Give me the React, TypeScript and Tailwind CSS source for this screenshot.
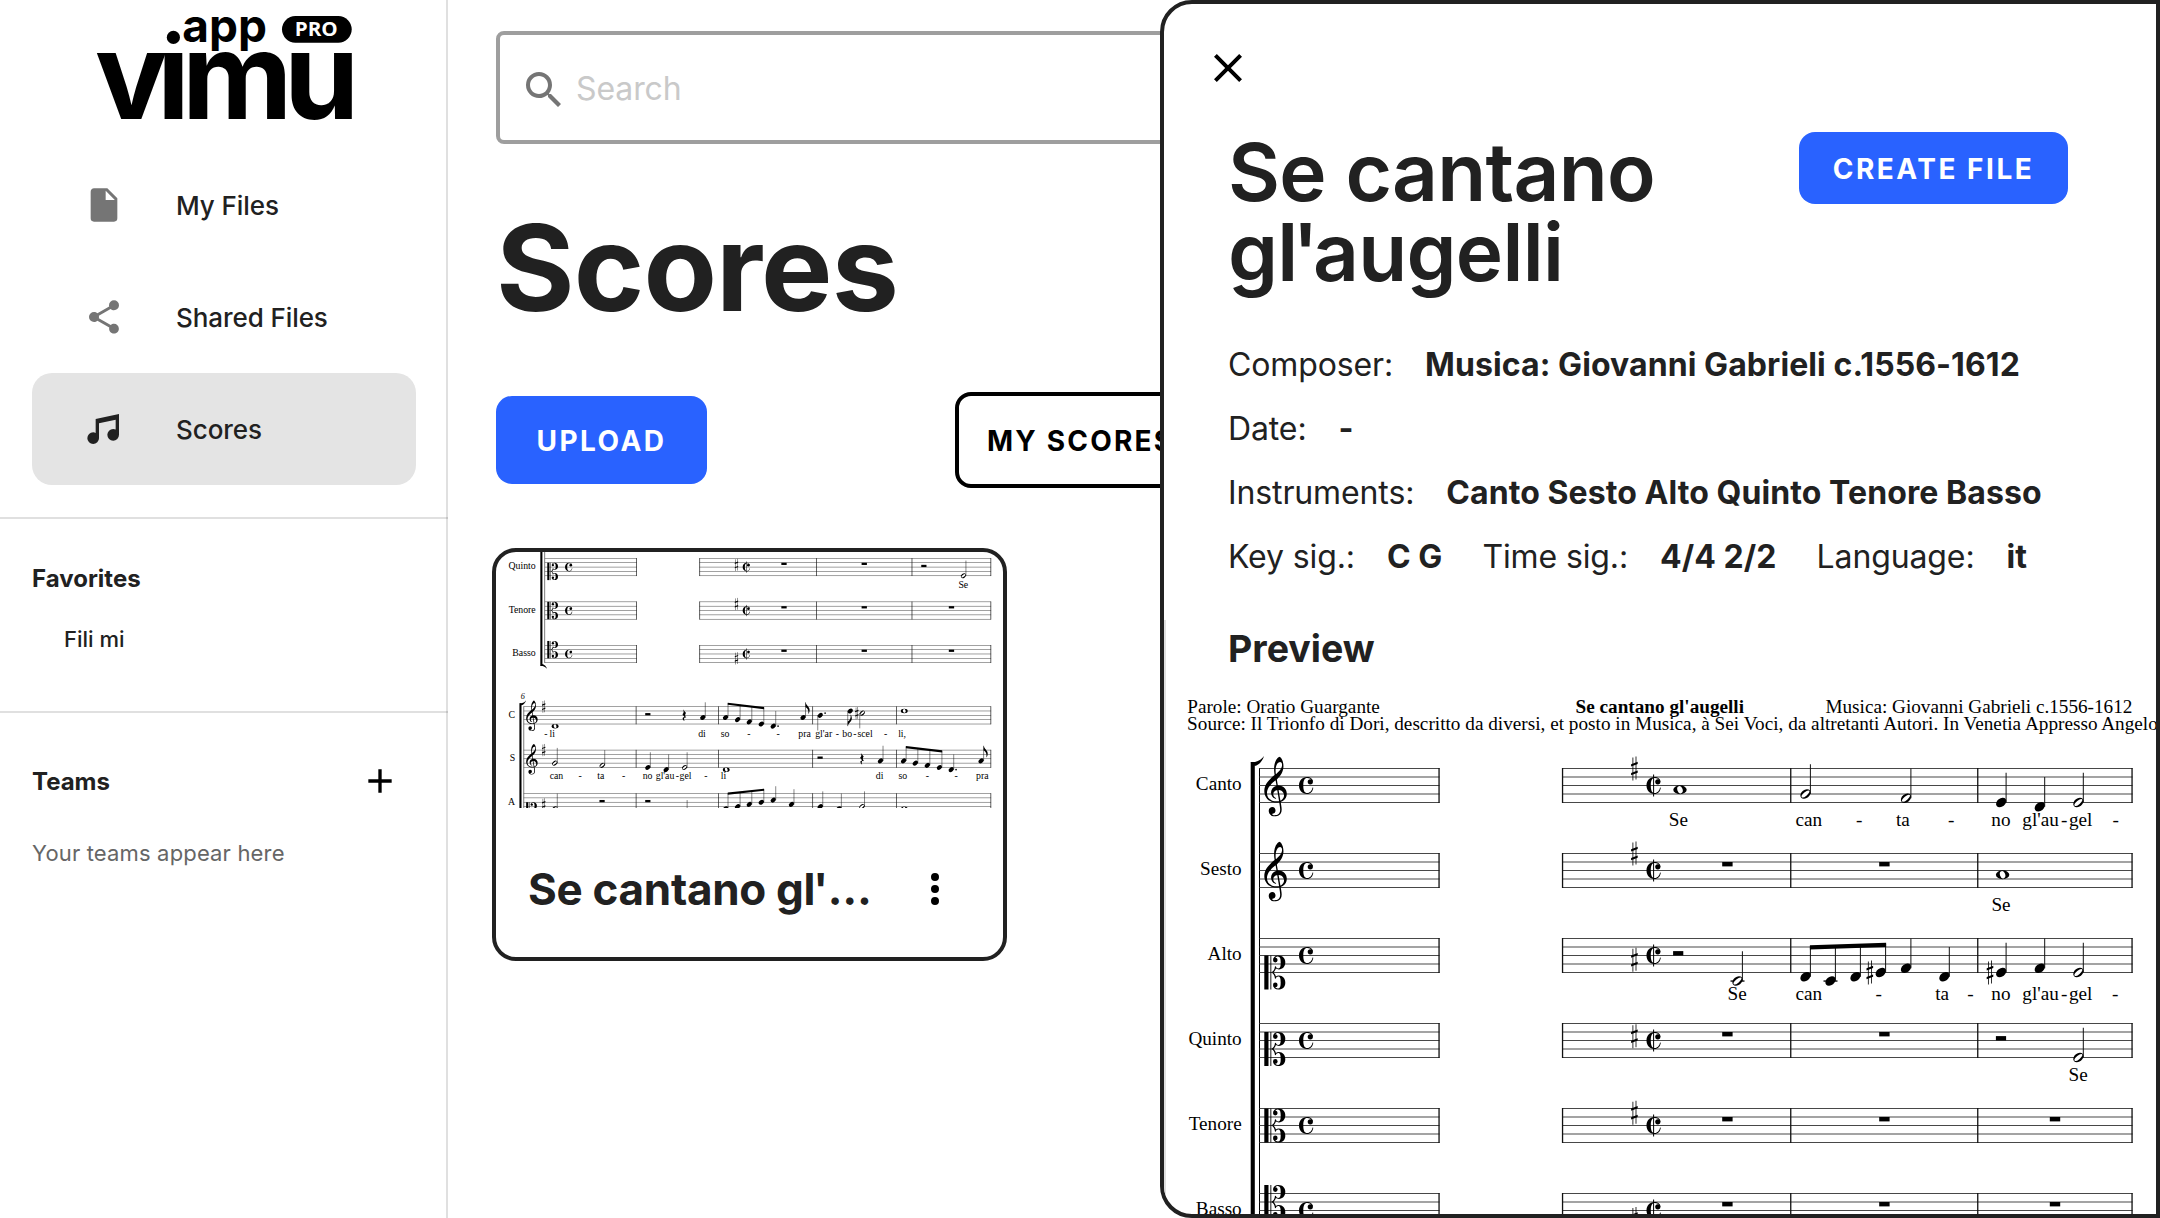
import { type ReactNode } from 'react';

const SP = 8.5;

const G_CLEF =
  'M364 -252c-245 0 -364 165 -364 339c0 202 153 345 297 464c12 10 11 12 9 24c-7 41 -14 106 -14 164c0 104 24 229 98 311c20 22 51 48 65 48c11 0 37 -28 52 -50c41 -60 65 -146 65 -233c0 -153 -82 -280 -190 -381c-6 -6 -8 -7 -6 -19l25 -145c3 -18 3 -18 29 -18c147 0 241 -113 241 -241c0 -113 -67 -198 -168 -238c-14 -6 -15 -5 -13 -17c11 -62 29 -157 29 -214c0 -170 -130 -200 -197 -200c-151 0 -190 98 -190 163c0 62 40 115 107 115c61 0 96 -47 96 -102c0 -58 -36 -85 -67 -94c-23 -7 -32 -10 -32 -17c0 -13 26 -29 80 -29c59 0 158 18 158 166c0 47 -15 134 -27 201c-2 12 -4 11 -15 9c-20 -4 -46 -6 -69 -6zM80 20c0 -139 113 -236 288 -236c20 0 40 2 56 5c15 3 16 3 14 14l-50 298c-2 11 -4 12 -20 8c-61 -17 -100 -60 -100 -117c0 -46 30 -89 72 -107c7 -3 15 -6 15 -13c0 -6 -4 -11 -12 -11c-7 0 -19 3 -27 6c-68 23 -115 87 -115 177c0 85 57 164 145 194c18 6 18 5 15 24l-21 128c-2 11 -4 12 -14 4c-47 -38 -93 -75 -153 -142c-83 -94 -93 -173 -93 -232zM470 943c-61 0 -133 -96 -133 -252c0 -32 2 -66 6 -92c2 -13 6 -14 13 -8c79 69 174 159 174 270c0 55 -27 82 -60 82zM441 117c-12 1 -13 -2 -11 -14l49 -285c2 -12 4 -12 16 -6c56 28 94 79 94 142c0 88 -67 156 -148 163z';

const C_LOBE =
  'M7 0C9.5 -1.2 10.4 -3.5 10.7 -6.2L11.6 -6C11.9 -4.8 12.8 -4.1 14 -4.1C16 -4.1 16.4 -6.5 16.4 -10C16.4 -14 15.8 -16 13.6 -16C12.3 -16 11.2 -15.3 10.9 -14.3L9 -13C9.2 -15.6 11.2 -17 14 -17C18.5 -17 21 -14.2 21 -10.2C21 -6 18.4 -3.1 14.6 -3.1C13.3 -3.1 12.3 -3.4 11.6 -3.9C11 -2 10 -.8 9.3 0Z';

const COMMON =
  'M8 -8.5C3 -8.5 0 -4.5 0 0C0 4.5 3 8.5 8 8.5C11.5 8.5 13.8 6 14.3 2.2L13.5 2.1C13 5.2 11 7.6 8.3 7.6C5.4 7.6 4.3 5 4.3 0C4.3 -5 5.4 -7.6 8.3 -7.6C10.4 -7.6 12 -6.8 12.4 -5.6L14 -3.5C14 -6.5 11.5 -8.5 8 -8.5Z';

function TrebleClef({ x, top }: { x: number; top: number }) {
  return <path d={G_CLEF} transform={`translate(${x} ${top + 3 * SP}) scale(0.0335 -0.034)`} />;
}

function CClef({ x, y }: { x: number; y: number }) {
  return (
    <g transform={`translate(${x} ${y})`}>
      <rect x="0" y="-17" width="4.2" height="34" />
      <rect x="6.1" y="-17" width="0.9" height="34" />
      <path d={C_LOBE} />
      <circle cx="11" cy="-12.4" r="2.3" />
      <path d={C_LOBE} transform="scale(1 -1)" />
      <circle cx="11" cy="12.4" r="2.3" />
    </g>
  );
}

function Common({ x, top, cut = false }: { x: number; top: number; cut?: boolean }) {
  return (
    <g transform={`translate(${x} ${top + 2 * SP})`}>
      <path d={COMMON} />
      <circle cx="11.3" cy="-3.7" r="2.6" />
      {cut && <rect x="6.6" y="-11" width="1" height="22" />}
    </g>
  );
}

function Sharp({ x, top, p }: { x: number; top: number; p: number }) {
  return (
    <g transform={`translate(${x} ${top + (p * SP) / 2})`}>
      <rect x="-1.9" y="-11" width="0.8" height="23" />
      <rect x="1.2" y="-12" width="0.8" height="23" />
      <path d="M-3.3 -2.4L3.3 -4.9V-7.2L-3.3 -4.7ZM-3.3 6.2L3.3 3.7V1.4L-3.3 3.9Z" transform="translate(0 0.5)" />
    </g>
  );
}

/* A staff position p counts half spaces downwards from the top line. */
type NoteProps = {
  x: number;
  top: number;
  p: number;
  kind?: 'q' | 'h' | 'w';
  down?: boolean;
  stem?: number;
  flag?: boolean;
  dot?: boolean;
};

function Note({ x, top, p, kind = 'q', down = false, stem = 29.75, flag = false, dot = false }: NoteProps) {
  const y = top + (p * SP) / 2;
  const sx = down ? x - 4.9 : x + 4.9;
  return (
    <g>
      {p >= 10 && <rect x={x - 7} y={top + 5 * SP - 0.6} width="14" height="1.3" />}
      {kind === 'w' ? (
        <>
          <ellipse cx={x} cy={y} rx="6.7" ry="4.4" />
          <ellipse cx={x} cy={y} rx="2.6" ry="3.7" fill="#fff" transform={`rotate(-20 ${x} ${y})`} />
        </>
      ) : (
        <>
          <ellipse cx={x} cy={y} rx="5.7" ry="4.1" transform={`rotate(-38 ${x} ${y})`} />
          {kind === 'h' && (
            <ellipse cx={x} cy={y} rx="4.9" ry="1.8" fill="#fff" transform={`rotate(-40 ${x} ${y})`} />
          )}
          <line x1={sx} x2={sx} y1={y} y2={down ? y + stem : y - stem} stroke="#111" strokeWidth="1" />
        </>
      )}
      {flag && !down && <path d={`M${sx} ${y - stem}c1 6 8 9 8 15c0 3 -1 6 -2.5 8c1 -7 -1 -11 -5.5 -14z`} />}
      {flag && down && <path d={`M${sx} ${y + stem}c1 -6 8 -9 8 -15c0 -3 -1 -6 -2.5 -8c1 7 -1 11 -5.5 14z`} />}
      {dot && <circle cx={x + 9.5} cy={p % 2 ? y : y - SP / 2} r="1.6" />}
    </g>
  );
}

function WholeRest({ x, top }: { x: number; top: number }) {
  return <rect x={x - 5.2} y={top + SP} width="10.4" height="4.4" />;
}

function HalfRest({ x, top }: { x: number; top: number }) {
  return <rect x={x - 5.1} y={top + 2 * SP - 4.4} width="10.2" height="4.4" />;
}

function QuarterRest({ x, top }: { x: number; top: number }) {
  return (
    <path
      transform={`translate(${x} ${top + 2 * SP})`}
      d="M-2.5 -12L3.5 -4.5C1 -2 1.5 1 4 5C0.5 3.5 -1.5 5 0.5 11.5C-4 8 -4.5 3.5 0.5 3.2L-3.5 -2C-0.5 -5 -0.5 -8 -2.5 -12Z"
    />
  );
}

function Beam({ x1, y1, x2, y2 }: { x1: number; y1: number; x2: number; y2: number }) {
  return <path d={`M${x1} ${y1}L${x2} ${y2}V${y2 + 4.3}L${x1} ${y1 + 4.3}Z`} />;
}

/* Four beamed eighths; each stem ends on the beam. */
function BeamGroup({ xs, ps, top, y1, y2 }: { xs: number[]; ps: number[]; top: number; y1: number; y2: number }) {
  const a = xs[0] + 4.4;
  const b = xs[xs.length - 1] + 5.4;
  return (
    <g>
      {xs.map((x, i) => {
        const beamY = y1 + ((y2 - y1) * (x - xs[0])) / (xs[xs.length - 1] - xs[0]);
        return <Note key={x} x={x} top={top} p={ps[i]} stem={top + (ps[i] * SP) / 2 - beamY - 1} />;
      })}
      <Beam x1={a} y1={y1} x2={b} y2={y2} />
    </g>
  );
}

function Staff({ x1, x2, top, bars }: { x1: number; x2: number; top: number; bars: number[] }) {
  return (
    <g>
      {[0, 1, 2, 3, 4].map((i) => (
        <rect key={i} x={x1} y={top + i * SP - 0.5} width={x2 - x1} height="1" fill="#484848" />
      ))}
      {bars.map((b) => (
        <rect key={b} x={b - 0.6} y={top - 0.5} width="1.3" height={4 * SP + 1} fill="#111" />
      ))}
    </g>
  );
}

function Lyrics({ y, words }: { y: number; words: [number, string][] }) {
  return (
    <g>
      {words.map(([x, w]) => (
        <text key={x} x={x} y={y}>
          {w}
        </text>
      ))}
    </g>
  );
}

const PARTS: { name: string; top: number; clef: number | null; key: number }[] = [
  { name: 'Canto', top: 768.5, clef: null, key: 0 },
  { name: 'Sesto', top: 853.5, clef: null, key: 0 },
  { name: 'Alto', top: 938.5, clef: 8, key: 5 },
  { name: 'Quinto', top: 1023.5, clef: 6, key: 3 },
  { name: 'Tenore', top: 1108.5, clef: 4, key: 1 },
  { name: 'Basso', top: 1193.5, clef: 2, key: 6 },
];

function FirstSystem() {
  const [canto, sesto, alto, quinto, tenore, basso] = PARTS.map((p) => p.top);
  return (
    <g>
      <rect x="1250.7" y="762" width="4.1" height="472" />
      <path d="M1250.7 762H1255C1259 761 1262 759 1264 756C1262.5 761 1259 765 1254.8 766Z" />
      <path d="M1250.7 1234H1255C1259 1235 1262 1237 1264 1240C1262.5 1235 1259 1231 1254.8 1230Z" />
      <rect x="1259" y="768" width="1" height="460" />
      {PARTS.map((part) => (
        <g key={part.name}>
          <text x="1241.7" y={part.top + 21.7} textAnchor="end">
            {part.name}
          </text>
          <Staff x1={1259.5} x2={1439.5} top={part.top} bars={[1439]} />
          {part.clef === null ? (
            <TrebleClef x={1264.3} top={part.top} />
          ) : (
            <CClef x={1264.3} y={part.top + (part.clef * SP) / 2} />
          )}
          <Common x={1299} top={part.top} />
          <Staff x1={1562} x2={2132.5} top={part.top} bars={[1562.5, 1790.7, 1977.7, 2132]} />
          <Sharp x={1634.4} top={part.top} p={part.key} />
          <Common x={1646.5} top={part.top} cut />
        </g>
      ))}

      <Note x={1680} top={canto} p={5} kind="w" />
      <Note x={1805.5} top={canto} p={6} kind="h" />
      <Note x={1906} top={canto} p={7} kind="h" />
      <Note x={2001.2} top={canto} p={8} />
      <Note x={2039.8} top={canto} p={9} />
      <Note x={2078.4} top={canto} p={8} kind="h" />
      <Lyrics
        y={825.9}
        words={[
          [1668.8, 'Se'],
          [1795.5, 'can'],
          [1856, '-'],
          [1896, 'ta'],
          [1948, '-'],
          [1991.3, 'no'],
          [2022.3, "gl'au"],
          [2061, '-'],
          [2069, 'gel'],
          [2112.5, '-'],
        ]}
      />

      <WholeRest x={1727.4} top={sesto} />
      <WholeRest x={1884.4} top={sesto} />
      <Note x={2002.6} top={sesto} p={5} kind="w" />
      <Lyrics y={910.9} words={[[1991.4, 'Se']]} />

      <HalfRest x={1678.2} top={alto} />
      <Note x={1737.5} top={alto} p={10} kind="h" />
      <BeamGroup xs={[1805.5, 1830.5, 1855.5, 1880.7]} ps={[9, 10, 9, 8]} top={alto} y1={945.2} y2={942.8} />
      <Sharp x={1869.8} top={alto} p={8} />
      <Note x={1906} top={alto} p={7} />
      <Note x={1944.4} top={alto} p={9} />
      <Sharp x={1990} top={alto} p={8} />
      <Note x={2001.2} top={alto} p={8} />
      <Note x={2039.8} top={alto} p={7} />
      <Note x={2078.4} top={alto} p={8} kind="h" />
      <Lyrics
        y={999.9}
        words={[
          [1727.5, 'Se'],
          [1795.5, 'can'],
          [1875.5, '-'],
          [1935.2, 'ta'],
          [1967.3, '-'],
          [1991.3, 'no'],
          [2022.3, "gl'au"],
          [2061, '-'],
          [2069, 'gel'],
          [2112, '-'],
        ]}
      />

      <WholeRest x={1727.4} top={quinto} />
      <WholeRest x={1884.4} top={quinto} />
      <HalfRest x={2001} top={quinto} />
      <Note x={2078.4} top={quinto} p={8} kind="h" />
      <Lyrics y={1080.9} words={[[2068.6, 'Se']]} />

      {[tenore, basso].map((top) => (
        <g key={top}>
          <WholeRest x={1727.4} top={top} />
          <WholeRest x={1884.4} top={top} />
          <WholeRest x={2055} top={top} />
        </g>
      ))}
    </g>
  );
}

function SecondSystem() {
  const c = 1313.5;
  const s = 1398.5;
  const a = 1483.5;
  const names: [string, number][] = [
    ['C', c],
    ['S', s],
    ['A', a],
  ];
  return (
    <g>
      <text x="1212.5" y="1298.5" fontSize="16" fontStyle="italic">
        6
      </text>
      <rect x="1209.8" y="1307" width="4.1" height="300" />
      <path d="M1209.8 1307H1214C1218 1306 1221 1304 1223 1301C1221.5 1306 1218 1310 1213.9 1311Z" />
      <rect x="1218" y="1313" width="1" height="300" />
      {names.map(([n, top]) => (
        <g key={n}>
          <text x="1201.5" y={top + 21.5} textAnchor="end">
            {n}
          </text>
          <Staff x1={1218} x2={2132.5} top={top} bars={[1438, 1599, 1783.5, 1947.2, 2132]} />
        </g>
      ))}
      <TrebleClef x={1223} top={c} />
      <TrebleClef x={1223} top={s} />
      <CClef x={1223} y={a + 4 * SP} />
      <Sharp x={1257.3} top={c} p={0} />
      <Sharp x={1257.3} top={s} p={0} />
      <Sharp x={1257.3} top={a} p={5} />

      <Note x={1279.6} top={c} p={9} kind="w" />
      <HalfRest x={1461} top={c} />
      <QuarterRest x={1532.2} top={c} />
      <Note x={1568.5} top={c} p={5} />
      <BeamGroup xs={[1613, 1636.6, 1659.5, 1683]} ps={[5, 6, 7, 8]} top={c} y1={1305.7} y2={1314.2} />
      <Note x={1706.3} top={c} p={9} dot />
      <Note x={1764.6} top={c} p={5} flag />
      <Note x={1798.3} top={c} p={4} down dot />
      <Note x={1857} top={c} p={2} down flag />
      <Sharp x={1869.8} top={c} p={3} />
      <Note x={1880.5} top={c} p={3} kind="h" down />
      <Note x={1962.7} top={c} p={2} kind="w" />
      <Lyrics
        y={1372.2}
        words={[
          [1258.5, '-'],
          [1268.7, 'li'],
          [1559.5, 'di'],
          [1603.5, 'so'],
          [1655.3, '-'],
          [1712.6, '-'],
          [1755.5, 'pra'],
          [1788.5, "gl'ar"],
          [1828.5, '-'],
          [1841.5, 'bo'],
          [1863, '-'],
          [1871, 'scel'],
          [1923, '-'],
          [1950.7, 'li,'],
        ]}
      />

      <Note x={1279} top={s} p={6} kind="h" />
      <Note x={1371.8} top={s} p={7} kind="h" />
      <Note x={1461} top={s} p={8} />
      <Note x={1496.8} top={s} p={9} />
      <Note x={1533} top={s} p={8} kind="h" />
      <Note x={1614.4} top={s} p={9} kind="w" />
      <HalfRest x={1798} top={s} />
      <QuarterRest x={1879.8} top={s} />
      <Note x={1916.2} top={s} p={5} />
      <BeamGroup xs={[1961.4, 1984.3, 2007.8, 2031.4]} ps={[5, 6, 7, 8]} top={s} y1={1390.5} y2={1399} />
      <Note x={2054.5} top={s} p={9} dot />
      <Note x={2113} top={s} p={5} flag />
      <Lyrics
        y={1454.8}
        words={[
          [1269, 'can'],
          [1325.5, '-'],
          [1362, 'ta'],
          [1410.5, '-'],
          [1451, 'no'],
          [1476.5, "gl'au"],
          [1515.5, '-'],
          [1523, 'gel'],
          [1571.5, '-'],
          [1603.5, 'li'],
          [1907, 'di'],
          [1951.5, 'so'],
          [2004.5, '-'],
          [2061, '-'],
          [2103, 'pra'],
        ]}
      />

      <Note x={1279} top={a} p={7} kind="h" />
      <HalfRest x={1371.5} top={a} />
      <HalfRest x={1461} top={a} />
      <Note x={1533} top={a} p={10} kind="h" />
      <BeamGroup xs={[1613, 1636.6, 1659.5, 1683]} ps={[7, 6, 5, 4]} top={a} y1={1481.7} y2={1473.9} />
      <Note x={1706.3} top={a} p={3} stem={27} />
      <Note x={1742} top={a} p={5} />
      <Note x={1798.3} top={a} p={6} />
      <Note x={1834.7} top={a} p={7} />
      <Note x={1880} top={a} p={6} kind="h" />
      <Note x={1962.7} top={a} p={7} kind="w" />
    </g>
  );
}

function ScorePreview() {
  return (
    <svg
      className="block h-[531px] w-[990px] font-['Liberation_Serif',serif]"
      viewBox="1166 683 990 531"
      fontSize="19.2"
      fill="#000"
    >
      <text x="1187.3" y="713">
        Parole: Oratio Guargante
      </text>
      <text x="1659.8" y="713" textAnchor="middle" fontWeight="700">
        Se cantano gl'augelli
      </text>
      <text x="2132.4" y="713" textAnchor="end">
        Musica: Giovanni Gabrieli c.1556-1612
      </text>
      <text x="1187.1" y="730" textLength="970.7">
        Source: Il Trionfo di Dori, descritto da diversi, et posto in Musica, à Sei Voci, da altretanti Autori. In
        Venetia Appresso Angelo
      </text>
      <FirstSystem />
    </svg>
  );
}

function ScoreThumbnail() {
  return (
    <svg
      className="block h-[256px] w-[507px] font-['Liberation_Serif',serif]"
      viewBox="1164 1011 991.8 500.8"
      fontSize="19.2"
      fill="#000"
    >
      <FirstSystem />
      <SecondSystem />
    </svg>
  );
}

function Icon({ d, className }: { d: string; className: string }) {
  return (
    <svg viewBox="0 0 24 24" className={className} fill="currentColor">
      <path d={d} />
    </svg>
  );
}

const ICONS = {
  file: 'M13,9V3.5L18.5,9M6,2C4.89,2 4,2.89 4,4V20A2,2 0 0,0 6,22H18A2,2 0 0,0 20,20V8L14,2H6Z',
  share:
    'M18,16.08C17.24,16.08 16.56,16.38 16.04,16.85L8.91,12.7C8.96,12.47 9,12.24 9,12C9,11.76 8.96,11.53 8.91,11.3L15.96,7.19C16.5,7.69 17.21,8 18,8A3,3 0 0,0 21,5A3,3 0 0,0 18,2A3,3 0 0,0 15,5C15,5.24 15.04,5.47 15.09,5.7L8.04,9.81C7.5,9.31 6.79,9 6,9A3,3 0 0,0 3,12A3,3 0 0,0 6,15C6.79,15 7.5,14.69 8.04,14.19L15.16,18.34C15.11,18.55 15.08,18.77 15.08,19C15.08,20.61 16.39,21.91 18,21.91C19.61,21.91 20.92,20.61 20.92,19A2.92,2.92 0 0,0 18,16.08Z',
  music:
    'M21,3V15.5A3.5,3.5 0 0,1 17.5,19A3.5,3.5 0 0,1 14,15.5A3.5,3.5 0 0,1 17.5,12C18.04,12 18.55,12.12 19,12.34V6.47L9,8.6V17.5A3.5,3.5 0 0,1 5.5,21A3.5,3.5 0 0,1 2,17.5A3.5,3.5 0 0,1 5.5,14C6.04,14 6.55,14.12 7,14.34V6L21,3Z',
  plus: 'M19,13H13V19H11V13H5V11H11V5H13V11H19V13Z',
  magnify:
    'M9.5,3A6.5,6.5 0 0,1 16,9.5C16,11.11 15.41,12.59 14.44,13.73L14.71,14H15.5L20.5,19L19,20.5L14,15.5V14.71L13.73,14.44C12.59,15.41 11.11,16 9.5,16A6.5,6.5 0 0,1 3,9.5A6.5,6.5 0 0,1 9.5,3M9.5,5C7,5 5,7 5,9.5C5,12 7,14 9.5,14C12,14 14,12 14,9.5C14,7 12,5 9.5,5Z',
  close:
    'M19,6.41L17.59,5L12,10.59L6.41,5L5,6.41L10.59,12L5,17.59L6.41,19L12,13.41L17.59,19L19,17.59L13.41,12L19,6.41Z',
  dots: 'M12,16A2,2 0 0,1 14,18A2,2 0 0,1 12,20A2,2 0 0,1 10,18A2,2 0 0,1 12,16M12,10A2,2 0 0,1 14,12A2,2 0 0,1 12,14A2,2 0 0,1 10,12A2,2 0 0,1 12,10M12,4A2,2 0 0,1 14,6A2,2 0 0,1 12,8A2,2 0 0,1 10,6A2,2 0 0,1 12,4Z',
};

function Logo() {
  return (
    <svg viewBox="0 0 446 149" className="block h-[149px] w-[446px] font-[Inter,sans-serif]">
      <circle cx="173.4" cy="37.4" r="6.6" />
      <text x="182.3 209 238" y="42" fontSize="46" fontWeight="700">
        app
      </text>
      <rect x="282" y="16" width="69.7" height="26.7" rx="13.35" />
      <text
        x="294.8"
        y="36.3"
        fontSize="19"
        fontWeight="700"
        fill="#fff"
        textLength="43"
        lengthAdjust="spacingAndGlyphs"
        className="font-['Open_Sans',sans-serif]"
      >
        PRO
      </text>
      <text x="95 157 182 284" y="119.3" fontSize="121" fontWeight="700">
        vımu
      </text>
    </svg>
  );
}

function NavItem({ icon, label, active = false }: { icon: string; label: string; active?: boolean }) {
  return (
    <div
      className={
        active
          ? 'flex h-28 items-center rounded-[20px] bg-[#e4e4e4] pl-[52px] text-[#212121]'
          : 'flex h-28 items-center rounded-[20px] pl-[52px] text-[#757575]'
      }
    >
      <Icon d={icon} className="size-10" />
      <span className="ml-[52px] text-[26px] font-medium tracking-[-0.08px] text-[#212121]">{label}</span>
    </div>
  );
}

function Field({ label, children }: { label: string; children: ReactNode }) {
  return (
    <div className="flex gap-8">
      <span className="tracking-[-0.12px]">{label}</span>
      <span className="font-bold tracking-[0.08px]">{children}</span>
    </div>
  );
}

export default function App() {
  return (
    <div className="relative flex h-[1218px] w-[2160px] overflow-hidden bg-white font-[Inter,sans-serif] text-[#212121]">
      <aside className="w-[448px] shrink-0 border-r-2 border-black/12">
        <Logo />
        <nav className="pr-[30px] pb-8 pl-8">
          <NavItem icon={ICONS.file} label="My Files" />
          <NavItem icon={ICONS.share} label="Shared Files" />
          <NavItem icon={ICONS.music} label="Scores" active />
        </nav>
        <section className="-mr-0.5 h-[194px] border-t-2 border-black/12 px-8 pt-[35px]">
          <h3 className="flex h-12 items-center pt-0.5 text-[24px] font-bold">Favorites</h3>
          <div className="flex h-[74px] items-center pl-8 text-[22px] font-medium">
            <span>Fili mi</span>
          </div>
        </section>
        <section className="-mr-0.5 border-t-2 border-black/12 px-8 pt-[44px]">
          <div className="flex h-12 items-center justify-between pr-4">
            <h3 className="pt-0.5 text-[24px] font-bold">Teams</h3>
            <Icon d={ICONS.plus} className="size-10 text-black" />
          </div>
          <div className="flex h-24 items-center text-[22px] tracking-[0.16px] text-[#666]">
            <span>Your teams appear here</span>
          </div>
        </section>
      </aside>

      <main className="flex-1 pt-[31px] pl-12">
        <div className="flex h-[113px] items-center rounded-lg border-4 border-[#9e9e9e] pl-5">
          <Icon d={ICONS.magnify} className="mt-[5px] size-12 text-[#757575]" />
          <span className="ml-2 pt-[3px] text-[32px] tracking-[-0.1px] text-[#c9c9c9]">Search</span>
        </div>
        <h1 className="flex h-[248px] items-center text-[120px] font-bold tracking-[-0.9px]">Scores</h1>
        <div className="flex h-24 items-center">
          <button className="h-[88px] w-[211px] rounded-2xl bg-[#2962ff] pt-0.5 text-[28px] font-bold tracking-[2.5px] text-white">
            <span>UPLOAD</span>
          </button>
          <button className="ml-[248px] h-24 w-[300px] rounded-2xl border-4 border-black pt-0.5 pl-7 text-left text-[28px] font-bold tracking-[2.2px] text-black">
            <span>MY SCORES</span>
          </button>
        </div>
        <div className="mt-[60px] -ml-1 h-[413px] w-[515px] overflow-hidden rounded-3xl border-4 border-[#212121]">
          <ScoreThumbnail />
          <div className="flex h-[149px] items-center pt-3 pl-8">
            <h3 className="w-[352px] truncate text-[44px] font-bold tracking-[-0.3px]">
              Se cantano gl<span className="-mx-[2px]">'</span>augelli
            </h3>
            <Icon d={ICONS.dots} className="ml-[31px] size-12 text-black" />
          </div>
        </div>
      </main>

      <div className="absolute top-0 right-0 flex h-[1218px] w-[1000px] flex-col overflow-hidden rounded-l-[32px] border-4 border-[#212121] bg-white">
        <div className="flex h-32 items-center pl-10">
          <Icon d={ICONS.close} className="size-12 text-black" />
        </div>
        <div className="flex h-[201px] items-start justify-between pr-[88px] pl-16">
          <h2 className="w-[500px] text-[80px] leading-[80px] font-semibold tracking-[-0.7px]">
            Se cantano gl<span className="-mx-[5px]">'</span>augelli
          </h2>
          <button className="h-[72px] w-[269px] rounded-2xl bg-[#2962ff] pt-0.5 text-[28px] font-bold tracking-[2.5px] text-white">
            <span>CREATE FILE</span>
          </button>
        </div>
        <div className="flex flex-col pl-16 text-[32px] leading-[64px]">
          <Field label="Composer:">Musica: Giovanni Gabrieli c.1556-1612</Field>
          <Field label="Date:">-</Field>
          <Field label="Instruments:">Canto Sesto Alto Quinto Tenore Basso</Field>
          <div className="flex gap-10">
            <Field label="Key sig.:">C G</Field>
            <Field label="Time sig.:">4/4 2/2</Field>
            <Field label="Language:">it</Field>
          </div>
        </div>
        <div className="mt-[31px] flex-1 border-l-2 border-[#dfdfdf]">
          <h3 className="h-[63px] pt-px pl-[62px] text-[37.5px] leading-[56px] font-bold">Preview</h3>
          <ScorePreview />
        </div>
      </div>
    </div>
  );
}
